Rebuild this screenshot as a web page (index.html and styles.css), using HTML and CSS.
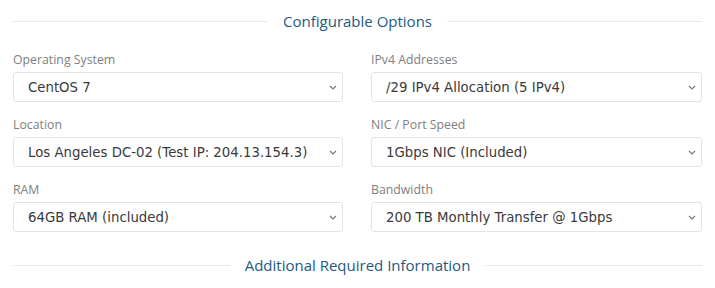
FILE: index.html
```html
<!DOCTYPE html>
<html lang="en">
<head>
  <meta charset="UTF-8" />
  <meta name="viewport" content="width=device-width, initial-scale=1.0" />
  <title>Configurable Options</title>
  <link rel="stylesheet" href="styles.css">
</head>
<body>

  <div class="section-title">
    <span class="rule"></span>
    <h2>Configurable Options</h2>
    <span class="rule"></span>
  </div>

  <div class="options">
    <div class="field">
      <label for="os">Operating System</label>
      <div class="select-wrap">
        <select id="os"><option>CentOS 7</option></select>
        <svg class="chevron" width="8" height="5" viewBox="0 0 8 5"><path d="M1 1l3 3 3-3" fill="none" stroke="#777" stroke-width="1.2"/></svg>
      </div>
    </div>
    <div class="field">
      <label for="ipv4">IPv4 Addresses</label>
      <div class="select-wrap">
        <select id="ipv4"><option>/29 IPv4 Allocation (5 IPv4)</option></select>
        <svg class="chevron" width="8" height="5" viewBox="0 0 8 5"><path d="M1 1l3 3 3-3" fill="none" stroke="#777" stroke-width="1.2"/></svg>
      </div>
    </div>
    <div class="field">
      <label for="location">Location</label>
      <div class="select-wrap">
        <select id="location"><option>Los Angeles DC-02 (Test IP: 204.13.154.3)</option></select>
        <svg class="chevron" width="8" height="5" viewBox="0 0 8 5"><path d="M1 1l3 3 3-3" fill="none" stroke="#777" stroke-width="1.2"/></svg>
      </div>
    </div>
    <div class="field">
      <label for="nic">NIC / Port Speed</label>
      <div class="select-wrap">
        <select id="nic"><option>1Gbps NIC (Included)</option></select>
        <svg class="chevron" width="8" height="5" viewBox="0 0 8 5"><path d="M1 1l3 3 3-3" fill="none" stroke="#777" stroke-width="1.2"/></svg>
      </div>
    </div>
    <div class="field">
      <label for="ram">RAM</label>
      <div class="select-wrap">
        <select id="ram"><option>64GB RAM (included)</option></select>
        <svg class="chevron" width="8" height="5" viewBox="0 0 8 5"><path d="M1 1l3 3 3-3" fill="none" stroke="#777" stroke-width="1.2"/></svg>
      </div>
    </div>
    <div class="field">
      <label for="bandwidth">Bandwidth</label>
      <div class="select-wrap">
        <select id="bandwidth"><option>200 TB Monthly Transfer @ 1Gbps</option></select>
        <svg class="chevron" width="8" height="5" viewBox="0 0 8 5"><path d="M1 1l3 3 3-3" fill="none" stroke="#777" stroke-width="1.2"/></svg>
      </div>
    </div>
  </div>

  <div class="section-title bottom">
    <span class="rule"></span>
    <h2>Additional Required Information</h2>
    <span class="rule"></span>
  </div>

</body>
</html>
```

FILE: styles.css
```css
body {
  margin: 0;
  background: #fff;
  font-family: "Open Sans", Arial, sans-serif;
}

.section-title {
  display: flex;
  align-items: center;
  gap: 15px;
  padding: 11px 13px 0;
}

.section-title h2 {
  margin: 0;
  font-family: "Open Sans", Arial, sans-serif;
  font-weight: 400;
  font-size: 15px;
  line-height: 20px;
  color: #1d5a84;
  white-space: nowrap;
}

.section-title .rule {
  flex: 1;
  height: 1px;
  background: #e9e9e9;
}

.section-title.bottom {
  padding: 23px 13px 0;
}

.options {
  display: grid;
  grid-template-columns: 330px 331px;
  column-gap: 28px;
  row-gap: 15px;
  padding: 21px 13px 0;
}

.field label {
  display: block;
  font-size: 12.3px;
  line-height: 16px;
  color: #808080;
  margin-bottom: 4px;
}

.select-wrap {
  position: relative;
}

.select-wrap select {
  display: block;
  width: 100%;
  height: 30px;
  margin: 0;
  padding: 0 24px 0 14px;
  border: 1px solid #e4e4e4;
  border-radius: 3px;
  background: #fff;
  font-family: "DejaVu Sans", Verdana, sans-serif;
  font-size: 13.3px;
  color: #3a3a3a;
  box-sizing: border-box;
  appearance: none;
  -webkit-appearance: none;
}

.chevron {
  position: absolute;
  right: 6px;
  top: 13px;
  pointer-events: none;
}
```
